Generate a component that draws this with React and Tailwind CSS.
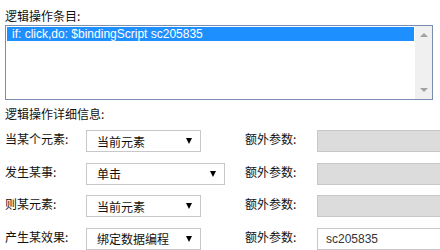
export default function App() {
  const cjk = { fontFamily: '"Noto Sans CJK SC", "Liberation Sans", sans-serif' };
  const rows = [
    { label: "当某个元素:", value: "当前元素", w: "w-[115px]", extra: "", disabled: true },
    { label: "发生某事:", value: "单击", w: "w-[139px]", extra: "", disabled: true },
    { label: "则某元素:", value: "当前元素", w: "w-[115px]", extra: "", disabled: true },
    { label: "产生某效果:", value: "绑定数据编程", w: "w-[115px]", extra: "sc205835", disabled: false },
  ];
  return (
    <div className="w-[440px] h-[250px] overflow-hidden bg-white text-[#111] text-[12px]" style={cjk}>
      <div className="pl-[5px] pt-[9px] h-[25px] leading-[14px]">逻辑操作条目:</div>
      <div className="ml-[5px] w-[428px] h-[75px] border border-[#7a8cb0] flex">
        <div className="flex-1 p-px">
          <div
            className="h-[14px] bg-[#1e8fff] text-white pl-[5px] leading-[14px] text-[12px]"
            style={{ fontFamily: '"Liberation Sans", Arial, sans-serif' }}
          >
            if: click,do: $bindingScript sc205835
          </div>
        </div>
        <div className="w-[17px] bg-[#f0f0f0] flex flex-col justify-between items-center py-[7px]">
          <div className="w-0 h-0 border-l-[4px] border-r-[4px] border-b-[4px] border-l-transparent border-r-transparent border-b-[#a0a0a0]" />
          <div className="w-0 h-0 border-l-[4px] border-r-[4px] border-t-[4px] border-l-transparent border-r-transparent border-t-[#a0a0a0]" />
        </div>
      </div>
      <div className="pl-[5px] pt-[7px] h-[30px] leading-[14px]">逻辑操作详细信息:</div>
      <div className="flex flex-col gap-[10.5px]">
        {rows.map((r, i) => (
          <div key={i} className="flex items-center h-[22px] w-[480px]">
            <div className="w-[86px] shrink-0 pl-[5px] leading-[14px] -mt-[4px]">{r.label}</div>
            <div className="w-[159px] shrink-0">
              <div className={`${r.w} h-[22px] border border-[#c8c8c8] bg-white flex items-center justify-between pl-[10px] pr-[8px]`}>
                <span className="leading-[14px] mt-px">{r.value}</span>
                <span className="w-0 h-0 border-l-[3px] border-r-[3px] border-t-[6px] border-l-transparent border-r-transparent border-t-black" />
              </div>
            </div>
            <div className="w-[72px] shrink-0 leading-[14px] -mt-[4px]">额外参数:</div>
            <div
              className={`w-[150px] shrink-0 h-[22px] border border-[#c8c8c8] flex items-center pl-[8px] ${r.disabled ? "bg-[#dcdcdc]" : "bg-white"}`}
              style={{ fontFamily: '"Liberation Sans", Arial, sans-serif' }}
            >
              <span className="text-[12px] text-[#333]">{r.extra}</span>
            </div>
          </div>
        ))}
      </div>
    </div>
  );
}
